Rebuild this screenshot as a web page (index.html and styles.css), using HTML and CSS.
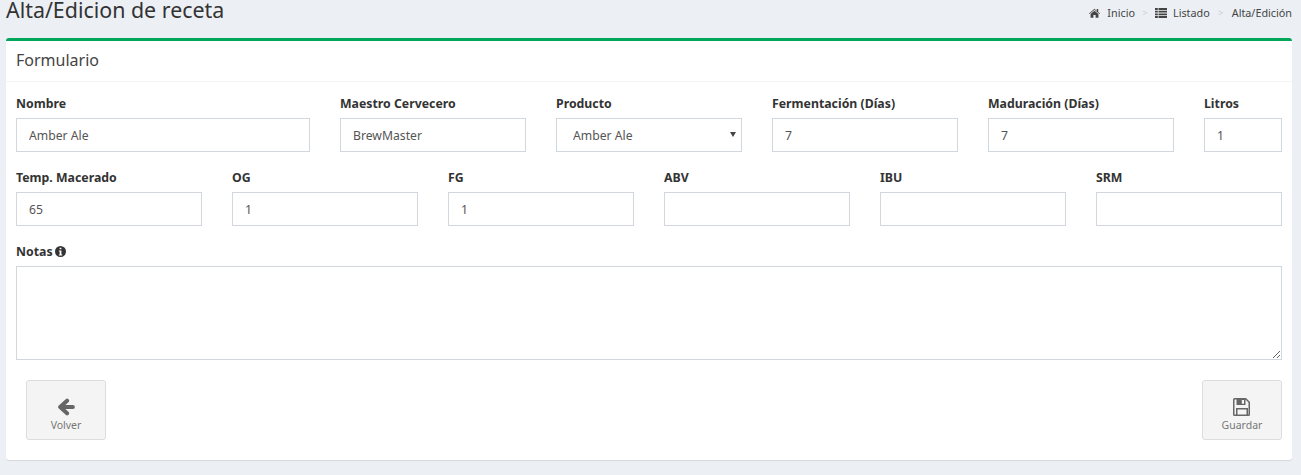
FILE: index.html
```html
<!DOCTYPE html>
<html lang="es">
<head>
<meta charset="utf-8">
<title>Alta/Edicion de receta</title>
<link rel="stylesheet" href="styles.css">
</head>
<body>
<header class="page-head">
  <h1 class="page-title">Alta/Edicion de receta</h1>
  <nav class="crumbs">
    <svg class="crumb-icon home" viewBox="0 0 14 12"><path d="M7 .6 0 6.600l.7.8L7 2l6.300 5.400.7-.8-2.300-2V1h-1.900v2.600z"/><path d="M7 3 2 7.300V12h3.600V8.500h2.800V12H12V7.300z"/></svg>
    <a class="crumb">Inicio</a><span class="sep">&gt;</span>
    <svg class="crumb-icon list" viewBox="0 0 12 10"><path d="M0 0h2.800v1.900H0zM3.500 0H12v1.900H3.500zM0 2.700h2.800v1.900H0zM3.500 2.700H12v1.900H3.500zM0 5.400h2.800v1.900H0zM3.500 5.400H12v1.900H3.500zM0 8.100h2.800V10H0zM3.500 8.100H12V10H3.500z"/></svg>
    <a class="crumb">Listado</a><span class="sep sep-wide">&gt;</span>
    <span class="crumb">Alta/Edición</span>
  </nav>
</header>
<main class="card">
  <div class="card-head">Formulario</div>
  <form class="card-body">
    <div class="grid">
      <div class="field s3"><label>Nombre</label><input class="control" value="Amber Ale"></div>
      <div class="field s2"><label>Maestro Cervecero</label><input class="control" value="BrewMaster"></div>
      <div class="field s2"><label>Producto</label>
        <div class="select-wrap"><select class="control select"><option>Amber Ale</option></select></div>
      </div>
      <div class="field s2"><label>Fermentación (Días)</label><input class="control" value="7"></div>
      <div class="field s2"><label>Maduración (Días)</label><input class="control" value="7"></div>
      <div class="field s1"><label>Litros</label><input class="control" value="1"></div>
      <div class="field s2"><label>Temp. Macerado</label><input class="control" value="65"></div>
      <div class="field s2"><label>OG</label><input class="control" value="1"></div>
      <div class="field s2"><label>FG</label><input class="control" value="1"></div>
      <div class="field s2"><label>ABV</label><input class="control"></div>
      <div class="field s2"><label>IBU</label><input class="control"></div>
      <div class="field s2"><label>SRM</label><input class="control"></div>
      <div class="field s12"><label>Notas
        <svg class="info" viewBox="0 0 12 12"><path fill-rule="evenodd" d="M6 0a6 6 0 1 0 0 12A6 6 0 0 0 6 0zM5 1.800h2v1.800H5zM4.200 4.900H7v4.300h.9v1.200H4.200V9.200h.9V6.100h-.9z"/></svg>
      </label><textarea class="control notes"></textarea></div>
    </div>
    <div class="actions">
      <button type="button" class="btn">
        <svg class="btn-icon" viewBox="0 0 17 17"><path d="M15 8.500H4M9.500 2.500 3 8.500l6.500 6" fill="none" stroke="currentColor" stroke-width="3.800" stroke-linecap="round" stroke-linejoin="round"/></svg>
        <span>Volver</span>
      </button>
      <button type="button" class="btn">
        <svg class="btn-icon" viewBox="0 0 18 18"><path fill-rule="evenodd" d="M1.500 0H13l4 4v12.500a1.500 1.500 0 0 1-1.500 1.500h-14A1.500 1.500 0 0 1 0 16.500v-15A1.500 1.500 0 0 1 1.500 0zM1.500 1.500v15H3V10h12v6.500h.5V4.600L12.500 1.600V7h-9V1.500zM4.500 11.500v5h9v-5zM8.800 2v3.700h2.200V2z"/></svg>
        <span>Guardar</span>
      </button>
    </div>
  </form>
</main>
</body>
</html>
```
FILE: styles.css
```css
* { box-sizing: border-box; }
html, body { height: 100%; }
body {
  margin: 0;
  padding: 0 9px 15px 6px;
  background: #ecf0f5;
  color: #333;
  font-family: "Noto Sans", "Open Sans", sans-serif;
  font-size: 13px;
  overflow: hidden;
}
.page-head {
  display: flex;
  justify-content: space-between;
  align-items: flex-start;
  height: 38px;
}
.page-title {
  margin: 0;
  font-size: 21.400px;
  font-weight: 400;
  line-height: 20px;
}
.crumbs {
  display: flex;
  align-items: center;
  margin-top: 6px;
  font-size: 10.800px;
  line-height: 14px;
  color: #444;
}
.crumb-icon { fill: #444; }
.home { width: 11px; height: 10px; margin-right: 7px; }
.list { width: 12px; height: 10px; margin-right: 6px; }
.sep { width: 20px; color: #ccc; font-size: 9px; text-align: center; }
.sep-wide { width: 22px; }
.card {
  height: 422px;
  background: #fff;
  border-top: 3px solid #00a65a;
  border-radius: 3px;
  box-shadow: 0 1px 1px rgba(0, 0, 0, .1);
}
.card-head {
  height: 41px;
  padding: 0 10px;
  border-bottom: 1px solid #f4f4f4;
  font-size: 16px;
  line-height: 38px;
  color: #444;
}
.card-body { padding: 11px 10px 0; }
.grid {
  display: grid;
  grid-template-columns: repeat(12, 1fr);
  column-gap: 30px;
  row-gap: 15px;
}
.field { display: flex; flex-direction: column; min-width: 0; }
.s1 { grid-column: span 1; }
.s2 { grid-column: span 2; }
.s3 { grid-column: span 3; }
.s12 { grid-column: span 12; }
label {
  display: flex;
  align-items: center;
  gap: 2px;
  height: 20px;
  margin-bottom: 5px;
  padding-top: 1px;
  font-size: 12.300px;
  font-weight: 700;
  line-height: 20px;
}
.info { width: 11px; height: 11px; fill: #333; }
.control {
  display: block;
  width: 100%;
  height: 34px;
  padding: 6px 12px;
  border: 1px solid #d2d6de;
  border-radius: 0;
  background: #fff;
  color: #555;
  font: 12.200px "Noto Sans", "Open Sans", sans-serif;
}
.select-wrap { position: relative; }
.select-wrap::after {
  content: "";
  position: absolute;
  top: 14px;
  right: 6px;
  border-style: solid;
  border-width: 5px 3px 0;
  border-color: #444 transparent transparent;
  pointer-events: none;
}
.select { padding-left: 16px; appearance: none; -webkit-appearance: none; }
.notes { height: 94px; resize: vertical; }
.actions {
  display: flex;
  justify-content: space-between;
  padding: 20px 0 0 10px;
}
.btn {
  display: flex;
  flex-direction: column;
  align-items: center;
  justify-content: flex-end;
  width: 80px;
  height: 60px;
  padding: 0 0 7px;
  border: 1px solid #ddd;
  border-radius: 3px;
  background: #f4f4f4;
  color: #777;
  font: 10.500px "Noto Sans", "Open Sans", sans-serif;
}
.btn-icon { width: 18px; height: 18px; fill: #666; color: #666; margin-bottom: 2px; }
```
